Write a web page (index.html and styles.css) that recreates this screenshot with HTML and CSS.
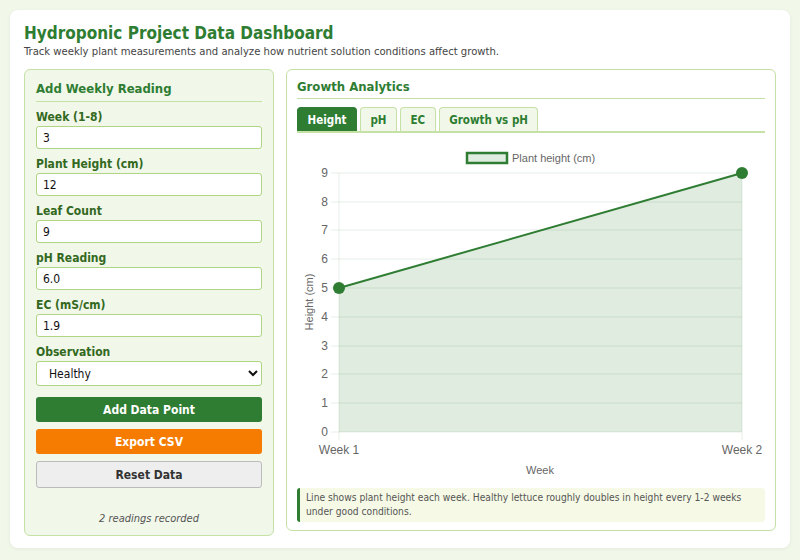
FILE: index.html
```html
<!DOCTYPE html>
<html lang="en">
<head>
    <meta charset="UTF-8">
    <meta name="viewport" content="width=device-width, initial-scale=1.0">
    <title>Hydroponic Project Data Dashboard</title>
    <link rel="stylesheet" href="styles.css">
</head>
<body>
    <div class="dashboard">
        <h1>Hydroponic Project Data Dashboard</h1>
        <p class="subtitle">Track weekly plant measurements and analyze how nutrient solution conditions affect growth.</p>

        <div class="layout">
            <!-- input form -->
            <div class="panel form-panel">
                <h2>Add Weekly Reading</h2>
                <div class="field">
                    <label for="week">Week (1-8)</label>
                    <input id="week" type="text" value="3">
                </div>
                <div class="field">
                    <label for="height">Plant Height (cm)</label>
                    <input id="height" type="text" value="12">
                </div>
                <div class="field">
                    <label for="leaves">Leaf Count</label>
                    <input id="leaves" type="text" value="9">
                </div>
                <div class="field">
                    <label for="ph">pH Reading</label>
                    <input id="ph" type="text" value="6.0">
                </div>
                <div class="field">
                    <label for="ec">EC (mS/cm)</label>
                    <input id="ec" type="text" value="1.9">
                </div>
                <div class="field">
                    <label for="obs">Observation</label>
                    <select id="obs">
                        <option>Healthy</option>
                        <option>Yellowing leaves</option>
                        <option>Wilting</option>
                        <option>Root rot</option>
                    </select>
                </div>
                <button class="btn btn-add">Add Data Point</button>
                <button class="btn btn-export">Export CSV</button>
                <button class="btn btn-reset">Reset Data</button>
                <p class="status">2 readings recorded</p>
            </div>

            <!-- chart -->
            <div class="panel chart-panel">
                <h2>Growth Analytics</h2>
                <div class="tabs">
                    <button class="tab active">Height</button>
                    <button class="tab">pH</button>
                    <button class="tab">EC</button>
                    <button class="tab">Growth vs pH</button>
                </div>

                <svg class="chart" width="468" height="346" viewBox="0 0 468 346">
                    <!-- legend -->
                    <rect x="170" y="15" width="40" height="10" fill="#e0ece0" stroke="#2e7d32" stroke-width="2.5"/>
                    <text class="legend-text" x="215" y="24">Plant height (cm)</text>

                    <!-- area -->
                    <polygon points="42,150 445,35 445,294 42,294" fill="#e0ece0"/>

                    <!-- grid -->
                    <g class="grid">
                        <line x1="34" y1="35" x2="445" y2="35"/>
                        <line x1="34" y1="64" x2="445" y2="64"/>
                        <line x1="34" y1="92" x2="445" y2="92"/>
                        <line x1="34" y1="121" x2="445" y2="121"/>
                        <line x1="34" y1="150" x2="445" y2="150"/>
                        <line x1="34" y1="179" x2="445" y2="179"/>
                        <line x1="34" y1="208" x2="445" y2="208"/>
                        <line x1="34" y1="236" x2="445" y2="236"/>
                        <line x1="34" y1="265" x2="445" y2="265"/>
                        <line x1="34" y1="294" x2="445" y2="294"/>
                        <line x1="42" y1="35" x2="42" y2="302"/>
                        <line x1="445" y1="35" x2="445" y2="302"/>
                    </g>

                    <!-- y ticks -->
                    <g class="tick-y">
                        <text x="31" y="39">9</text>
                        <text x="31" y="68">8</text>
                        <text x="31" y="96">7</text>
                        <text x="31" y="125">6</text>
                        <text x="31" y="154">5</text>
                        <text x="31" y="183">4</text>
                        <text x="31" y="212">3</text>
                        <text x="31" y="240">2</text>
                        <text x="31" y="269">1</text>
                        <text x="31" y="298">0</text>
                    </g>
                    <text class="axis-title" transform="translate(16,164) rotate(-90)">Height (cm)</text>

                    <!-- x ticks -->
                    <text class="tick-x" x="42" y="316">Week 1</text>
                    <text class="tick-x" x="445" y="316">Week 2</text>
                    <text class="axis-title" x="243" y="336">Week</text>

                    <!-- line -->
                    <polyline points="42,150 445,35" fill="none" stroke="#2e7d32" stroke-width="2"/>
                    <circle cx="42" cy="150" r="6" fill="#2e7d32"/>
                    <circle cx="445" cy="35" r="6" fill="#2e7d32"/>
                </svg>

                <p class="note">Line shows plant height each week. Healthy lettuce roughly doubles in height every 1-2 weeks under good conditions.</p>
            </div>
        </div>
    </div>
</body>
</html>
```

FILE: styles.css
```css
body {
    margin: 0;
    padding: 10px;
    background-color: #f1f8e9;
    font-family: "DejaVu Sans Condensed", "DejaVu Sans", Verdana, sans-serif;
    font-stretch: condensed;
    color: #333;
}
.dashboard {
    background: #fff;
    border-radius: 8px;
    box-shadow: 0 1px 4px rgba(0, 0, 0, 0.06);
    padding: 12px 14px 12px 14px;
}
h1 {
    margin: 0;
    font-size: 17px;
    line-height: 22px;
    color: #2e7d32;
}
.subtitle {
    margin: 0 0 9px;
    font-size: 11.2px;
    line-height: 16px;
    color: #444;
}
.layout {
    display: grid;
    grid-template-columns: 250px 1fr;
    gap: 12px;
    align-items: start;
}
.panel {
    background: #fff;
    border: 1px solid #c5e1a5;
    border-radius: 6px;
    padding: 8px 10px;
}
.form-panel {
    background: #f1f7e9;
    padding: 10px 11px 9px;
}
.panel h2 {
    margin: 0 0 8px;
    padding-bottom: 2px;
    font-size: 13px;
    line-height: 18px;
    color: #2e7d32;
    border-bottom: 1px solid #c5e1a5;
}
.form-panel h2 {
    margin-bottom: 8px;
    padding-bottom: 3px;
}
.field {
    margin-bottom: 8px;
}
.field label {
    display: block;
    margin-bottom: 2px;
    font-size: 12px;
    line-height: 14px;
    font-weight: bold;
    color: #33691e;
}
.field input, .field select {
    display: block;
    box-sizing: border-box;
    width: 100%;
    height: 23px;
    padding: 0 6px;
    border: 1px solid #aed581;
    border-radius: 3px;
    background: #fff;
    font-family: inherit;
    font-stretch: condensed;
    font-size: 12px;
    color: #111;
}
.field select {
    height: 25px;
    padding: 0 8px;
}
.btn {
    display: block;
    box-sizing: border-box;
    width: 100%;
    height: 25px;
    margin: 0 0 7px;
    border: none;
    border-radius: 3px;
    font-family: inherit;
    font-stretch: condensed;
    font-size: 12px;
    font-weight: bold;
    color: #fff;
    cursor: pointer;
}
.btn-add {
    margin-top: 11px;
    background: #2e7d32;
}
.btn-export {
    background: #f57c00;
}
.btn-reset {
    height: 27px;
    background: #eee;
    border: 1px solid #bbb;
    color: #333;
}
.status {
    margin: 24px 0 0;
    text-align: center;
    font-size: 11px;
    line-height: 14px;
    font-style: italic;
    color: #555;
}
.tabs {
    display: flex;
    gap: 3px;
    border-bottom: 2px solid #c5e1a5;
}
.tab {
    height: 24px;
    padding: 0 9.5px;
    border: 1px solid #c5e1a5;
    border-bottom: none;
    border-radius: 4px 4px 0 0;
    background: #f1f8e9;
    font-family: inherit;
    font-stretch: condensed;
    font-size: 11.5px;
    font-weight: bold;
    color: #2e7d32;
    cursor: pointer;
}
.tab.active {
    background: #2e7d32;
    border-color: #2e7d32;
    color: #fff;
}
.chart {
    display: block;
    margin-top: 5px;
    font-family: "Liberation Sans", Arial, sans-serif;
    font-stretch: normal;
}
.chart .grid line {
    stroke: rgba(46, 125, 50, 0.12);
    stroke-width: 1;
}
.legend-text {
    font-size: 11px;
    fill: #666;
}
.tick-y text {
    font-size: 12px;
    fill: #666;
    text-anchor: end;
}
.tick-x {
    font-size: 12px;
    fill: #666;
    text-anchor: middle;
}
.axis-title {
    font-size: 11px;
    fill: #666;
    text-anchor: middle;
}
.note {
    margin: 4px 0 0;
    padding: 3px 8px 3px 6px;
    border-left: 3px solid #2e7d32;
    border-radius: 3px;
    background: #f6f9e6;
    font-size: 10.2px;
    line-height: 14px;
    color: #555;
}
```
